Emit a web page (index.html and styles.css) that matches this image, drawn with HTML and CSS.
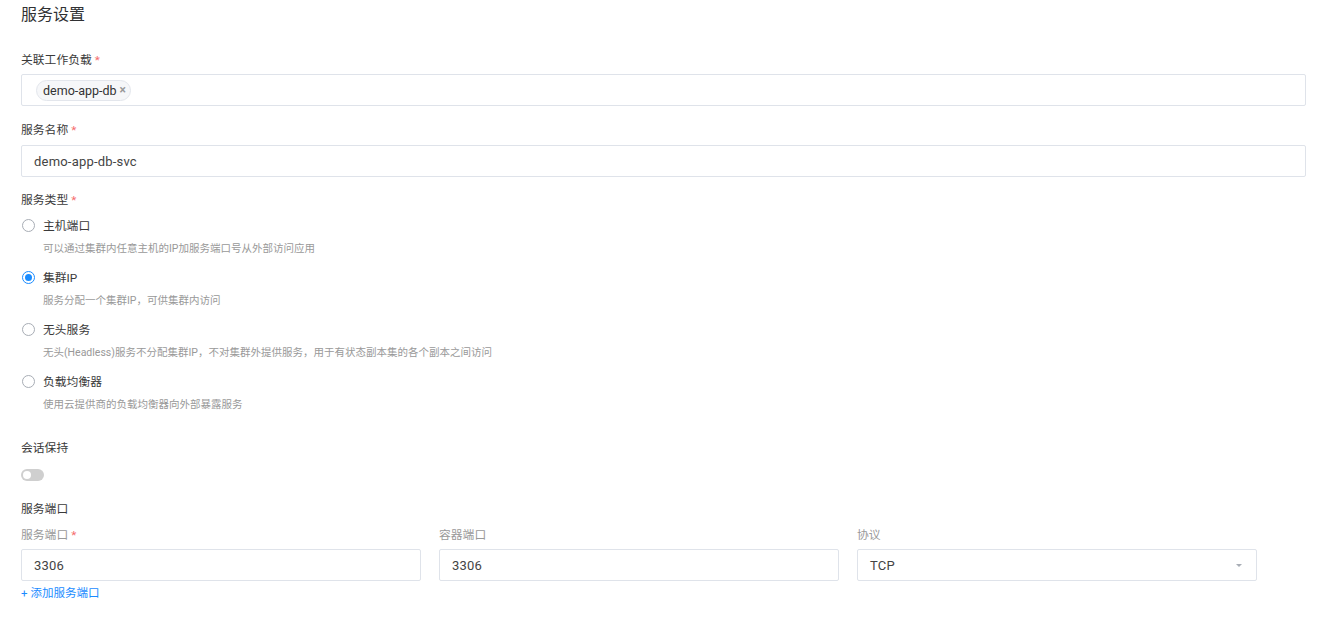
FILE: index.html
```html
<!DOCTYPE html>
<html lang="zh-CN">
<head>
<meta charset="utf-8">
<title>服务设置</title>
<link rel="stylesheet" href="styles.css">
</head>
<body>
<div class="page">
  <h3 class="title">服务设置</h3>

  <div class="label label-1">关联工作负载<span class="req">*</span></div>
  <div class="input tags">
    <span class="tag">demo-app-db<span class="tag-x">×</span></span>
  </div>

  <div class="label label-2">服务名称<span class="req">*</span></div>
  <div class="input">demo-app-db-svc</div>

  <div class="label label-3">服务类型<span class="req">*</span></div>
  <div class="options">
    <div class="option">
      <div class="opt-row"><span class="radio"></span><span>主机端口</span></div>
      <div class="opt-desc">可以通过集群内任意主机的IP加服务端口号从外部访问应用</div>
    </div>
    <div class="option">
      <div class="opt-row"><span class="radio checked"></span><span>集群IP</span></div>
      <div class="opt-desc">服务分配一个集群IP，可供集群内访问</div>
    </div>
    <div class="option">
      <div class="opt-row"><span class="radio"></span><span>无头服务</span></div>
      <div class="opt-desc">无头(Headless)服务不分配集群IP，不对集群外提供服务，用于有状态副本集的各个副本之间访问</div>
    </div>
    <div class="option">
      <div class="opt-row"><span class="radio"></span><span>负载均衡器</span></div>
      <div class="opt-desc">使用云提供商的负载均衡器向外部暴露服务</div>
    </div>
  </div>

  <div class="label label-session">会话保持</div>
  <div class="switch"><span class="knob"></span></div>

  <div class="label label-ports">服务端口</div>
  <div class="ports">
    <div class="port-col">
      <div class="sublabel">服务端口<span class="req">*</span></div>
      <div class="input">3306</div>
    </div>
    <div class="port-col">
      <div class="sublabel">容器端口</div>
      <div class="input">3306</div>
    </div>
    <div class="port-col">
      <div class="sublabel">协议</div>
      <div class="input select">TCP<span class="caret"></span></div>
    </div>
  </div>
  <a class="add-link" href="#">+ 添加服务端口</a>
</div>
</body>
</html>
```

FILE: styles.css
```css
* { box-sizing: border-box; }
html, body { margin: 0; padding: 0; background: #fff; }
body {
  font-family: Roboto, "Noto Sans CJK SC", "Noto Sans", sans-serif;
  font-size: 12px;
  color: #333;
}
.page {
  padding: 3px 16px 0 21px;
}
.title {
  margin: 0;
  font-size: 16px;
  font-weight: 400;
  line-height: 24px;
  color: #303133;
}
.label {
  line-height: 20px;
  font-size: 11.8px;
  color: #3a3a3a;
}
.label-1 { margin-top: 23px; margin-bottom: 4px; }
.label-2 { margin-top: 14px; margin-bottom: 5px; }
.label-3 { margin-top: 13px; margin-bottom: 6px; }
.req { color: #f56c6c; margin-left: 3px; }
.input {
  height: 32px;
  border: 1px solid #dfe3ea;
  border-radius: 2px;
  padding: 0 12px;
  display: flex;
  align-items: center;
  color: #444;
  font-size: 13px;
  letter-spacing: 0.2px;
}
.tags { padding: 0 14px; }
.tag {
  display: inline-flex;
  align-items: center;
  height: 21px;
  padding: 0 4px 0 6px;
  border: 1px solid #e3e6ec;
  background: #f6f7f9;
  border-radius: 11px;
  color: #333;
  font-size: 12.5px;
  letter-spacing: 0;
}
.tag-x { color: #999; margin-left: 3px; font-size: 12px; font-weight: 700; }
.options { display: flex; flex-direction: column; gap: 9px; }
.option { display: flex; flex-direction: column; gap: 3px; }
.opt-row {
  display: flex;
  align-items: center;
  line-height: 20px;
  font-size: 11.8px;
  color: #3a3a3a;
}
.radio {
  width: 13px;
  height: 13px;
  border: 1px solid #a8adb5;
  border-radius: 50%;
  margin: 0 8px 2px 1px;
  background: #fff;
  position: relative;
}
.radio.checked { border-color: #1a8cff; }
.radio.checked::after {
  content: "";
  position: absolute;
  left: 2px; top: 2px;
  width: 7px; height: 7px;
  border-radius: 50%;
  background: #1a8cff;
}
.opt-desc {
  margin-left: 22px;
  line-height: 20px;
  font-size: 10.5px;
  color: #999;
}
.label-session { margin-top: 23px; }
.switch {
  width: 23px;
  height: 12px;
  border-radius: 6px;
  background: #cfcfcf;
  margin-top: 11px;
  position: relative;
}
.knob {
  position: absolute;
  left: 2px; top: 2px;
  width: 8px; height: 8px;
  border-radius: 50%;
  background: #fff;
}
.label-ports { margin-top: 18px; margin-bottom: 6px; }
.ports {
  display: grid;
  grid-template-columns: 400px 400px 400px;
  column-gap: 18px;
}
.port-col { display: flex; flex-direction: column; }
.sublabel {
  line-height: 20px;
  font-size: 11.8px;
  color: #999;
  margin-bottom: 4px;
}
.select { position: relative; }
.caret {
  position: absolute;
  right: 14px; top: 14px;
  width: 0; height: 0;
  border-left: 3px solid transparent;
  border-right: 3px solid transparent;
  border-top: 3px solid #a8adb5;
}
.add-link {
  display: inline-block;
  margin-top: 4px;
  line-height: 16px;
  font-size: 11.5px;
  color: #1a8cff;
  text-decoration: none;
}
```
